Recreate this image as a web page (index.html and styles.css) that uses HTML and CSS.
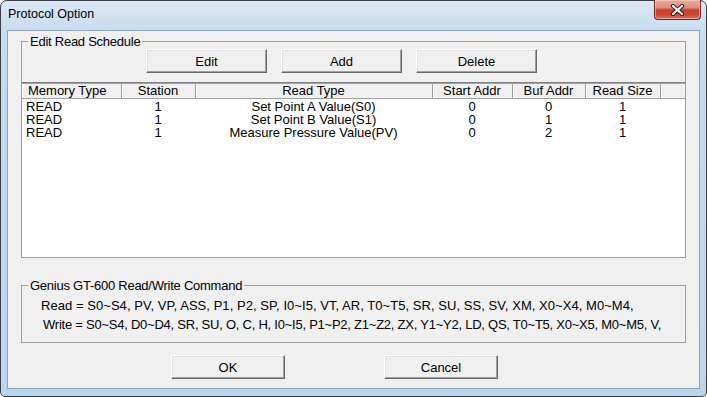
FILE: index.html
```html
<!DOCTYPE html>
<html lang="en">
<head>
    <meta charset="UTF-8">
    <meta name="viewport" content="width=device-width, initial-scale=1.0">
    <title>Protocol Option</title>
    <link rel="stylesheet" href="styles.css">
</head>
<body>
    <div class="window">
        <div class="titlebar">
            <span class="title">Protocol Option</span>
            <button type="button" class="close" aria-label="Close">
                <svg width="15" height="12" viewBox="0 0 15 12">
                    <path d="M3 2 L12 10 M12 2 L3 10" stroke="#3a1d18" stroke-width="4.2" stroke-linecap="round"/>
                    <path d="M3 2 L12 10 M12 2 L3 10" stroke="#ffffff" stroke-width="2.2" stroke-linecap="round"/>
                </svg>
            </button>
        </div>
        <div class="client">
            <fieldset class="group schedule">
                <legend>Edit Read Schedule</legend>
                <div class="toolbar">
                    <button type="button" class="btn wide">Edit</button>
                    <button type="button" class="btn wide">Add</button>
                    <button type="button" class="btn wide">Delete</button>
                </div>
                <div class="listview">
                    <table>
                        <colgroup>
                            <col class="c-mem">
                            <col class="c-station">
                            <col class="c-type">
                            <col class="c-start">
                            <col class="c-buf">
                            <col class="c-size">
                            <col>
                        </colgroup>
                        <thead>
                            <tr>
                                <th class="left">Memory Type</th>
                                <th>Station</th>
                                <th>Read Type</th>
                                <th>Start Addr</th>
                                <th>Buf Addr</th>
                                <th>Read Size</th>
                                <th class="filler"></th>
                            </tr>
                        </thead>
                        <tbody>
                            <tr>
                                <td class="left">READ</td>
                                <td>1</td>
                                <td>Set Point A Value(S0)</td>
                                <td>0</td>
                                <td>0</td>
                                <td>1</td>
                                <td></td>
                            </tr>
                            <tr>
                                <td class="left">READ</td>
                                <td>1</td>
                                <td>Set Point B Value(S1)</td>
                                <td>0</td>
                                <td>1</td>
                                <td>1</td>
                                <td></td>
                            </tr>
                            <tr>
                                <td class="left">READ</td>
                                <td>1</td>
                                <td>Measure Pressure Value(PV)</td>
                                <td>0</td>
                                <td>2</td>
                                <td>1</td>
                                <td></td>
                            </tr>
                        </tbody>
                    </table>
                </div>
            </fieldset>

            <fieldset class="group commands">
                <legend>Genius GT-600 Read/Write Command</legend>
                <p class="cmd read">Read = S0~S4, PV, VP, ASS, P1, P2, SP, I0~I5, VT, AR, T0~T5, SR, SU, SS, SV, XM, X0~X4, M0~M4,</p>
                <p class="cmd write">Write = S0~S4, D0~D4, SR, SU, O, C, H, I0~I5, P1~P2, Z1~Z2, ZX, Y1~Y2, LD, QS, T0~T5, X0~X5, M0~M5, V,</p>
            </fieldset>

            <div class="actions">
                <button type="button" class="btn">OK</button>
                <button type="button" class="btn">Cancel</button>
            </div>
        </div>
    </div>
</body>
</html>
```

FILE: styles.css
```css
* {
    box-sizing: border-box;
}
body {
    margin: 0;
    font-family: 'Liberation Sans', Arial, sans-serif;
    font-size: 13px;
    color: #000000;
    background-color: #ffffff;
}
.window {
    width: 707px;
    height: 397px;
    border: 1px solid #3c3f44;
    border-radius: 7px 7px 5px 5px;
    background: linear-gradient(#dbe8f6, #c9dcf0 30px, #bcd5ee);
    padding: 0 6px 7px;
    display: flex;
    flex-direction: column;
}
.titlebar {
    height: 29px;
    display: flex;
    justify-content: space-between;
    align-items: flex-start;
}
.title {
    font-size: 12.5px;
    line-height: 15px;
    padding: 6px 0 0 1px;
    color: #000000;
}
.close {
    width: 47px;
    height: 20px;
    margin: -1px -1px 0 0;
    padding: 0;
    border: 1px solid #6e2a20;
    border-top: none;
    border-radius: 0 0 4px 4px;
    background: linear-gradient(#e9ab9c, #dc8f7e 40%, #c5432d 52%, #c8472f 75%, #d9745c);
    box-shadow: inset 0 0 0 1px rgba(255, 220, 210, 0.5);
    display: flex;
    align-items: center;
    justify-content: center;
}
.close svg {
    display: block;
}
.client {
    flex: 1;
    border: 1px solid #8ba3bd;
    background-color: #f0f0f0;
    display: flex;
    flex-direction: column;
}
.group {
    margin: 0 13px;
    padding: 0;
    border: 1px solid #a0a0a0;
    min-width: 0;
}
.group legend {
    margin-left: 6px;
    padding: 0 2px;
    line-height: 15px;
    letter-spacing: -0.25px;
}
.schedule {
    margin-top: 3px;
}
.toolbar {
    display: flex;
    gap: 14px;
    padding-left: 124px;
}
.btn {
    height: 24px;
    width: 114px;
    padding: 0;
    font-family: inherit;
    font-size: 13px;
    color: #000000;
    background-color: #f0f0f0;
    border: 1px solid;
    border-color: #ffffff #696969 #696969 #ffffff;
    box-shadow: inset -1px -1px 0 #a0a0a0, inset 1px 1px 0 #e3e3e3;
}
.btn.wide {
    width: 121px;
}
.listview {
    margin: 9px -1px -1px;
    height: 176px;
    background-color: #ffffff;
    border: 1px solid #a0a0a0;
    border-top-color: #828282;
}
.listview table {
    width: 100%;
    border-collapse: collapse;
    table-layout: fixed;
}
.c-mem { width: 99px; }
.c-station { width: 74px; }
.c-type { width: 237px; }
.c-start { width: 80px; }
.c-buf { width: 73px; }
.c-size { width: 75px; }
.listview th {
    height: 15px;
    padding: 0;
    font-weight: normal;
    line-height: 14px;
    background-color: #f0f0f0;
    border-right: 1px solid #a0a0a0;
    border-bottom: 1px solid #a0a0a0;
    border-top: 1px solid #a0a0a0;
    box-shadow: inset 1px 0 0 #ffffff;
    white-space: nowrap;
}
.listview th.left {
    text-align: left;
    padding-left: 6px;
}
.listview th.filler {
    border-right: none;
}
.listview td {
    height: 13px;
    padding: 0;
    line-height: 13px;
    text-align: center;
    white-space: nowrap;
}
.listview tbody tr:first-child td {
    padding-top: 1px;
    height: 14px;
}
.listview td.left {
    text-align: left;
    padding-left: 4px;
}
.commands {
    margin-top: 20px;
    padding: 3px 0 8px;
}
.cmd {
    margin: 0;
    line-height: 19px;
    white-space: nowrap;
}
.read {
    padding-left: 19px;
    letter-spacing: 0.05px;
}
.write {
    padding-left: 21px;
    letter-spacing: -0.24px;
}
.actions {
    display: flex;
    gap: 99px;
    padding-left: 163px;
    margin-top: 12px;
}
```
